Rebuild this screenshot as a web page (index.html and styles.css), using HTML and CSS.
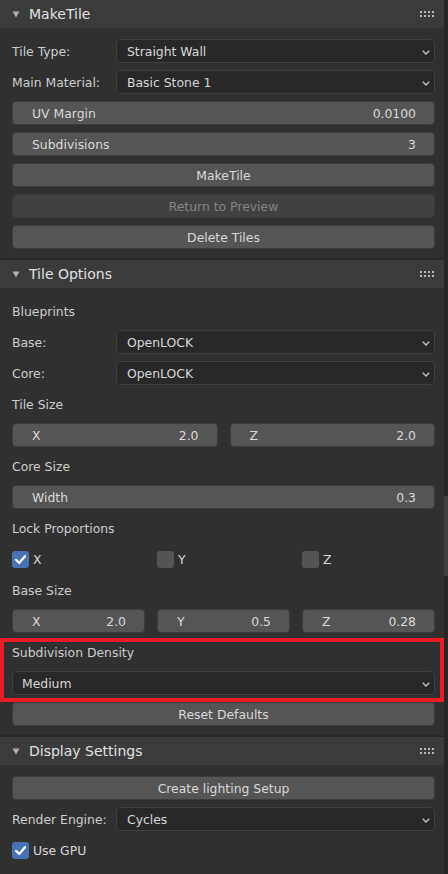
FILE: index.html
```html
<!DOCTYPE html>
<html>
<head>
<meta charset="utf-8">
<link rel="stylesheet" href="styles.css">
</head>
<body>
<div class="app">
  <div class="region">
    <section class="panel">
      <div class="panel-header">
        <svg class="tri" width="8" height="7" viewBox="0 0 8 7"><polygon points="0.5,0.5 7.5,0.5 4,6.5"/></svg>
        <span class="title">MakeTile</span>
        <svg class="grip" width="14" height="8" viewBox="0 0 14 8"><g><rect x="0" y="0" width="2" height="2"/><rect x="4" y="0" width="2" height="2"/><rect x="8" y="0" width="2" height="2"/><rect x="12" y="0" width="2" height="2"/><rect x="0" y="4" width="2" height="2"/><rect x="4" y="4" width="2" height="2"/><rect x="8" y="4" width="2" height="2"/><rect x="12" y="4" width="2" height="2"/></g></svg>
      </div>
      <div class="panel-body">
        <div class="prop"><span class="lbl">Tile Type:</span><div class="menu"><span>Straight Wall</span><svg class="chev" width="8" height="5" viewBox="0 0 8 5"><polyline points="0.8,0.8 4,4 7.2,0.8"/></svg></div></div>
        <div class="prop"><span class="lbl">Main Material:</span><div class="menu"><span>Basic Stone 1</span><svg class="chev" width="8" height="5" viewBox="0 0 8 5"><polyline points="0.8,0.8 4,4 7.2,0.8"/></svg></div></div>
        <div class="num"><span>UV Margin</span><span>0.0100</span></div>
        <div class="num"><span>Subdivisions</span><span>3</span></div>
        <div class="btn">MakeTile</div>
        <div class="btn disabled">Return to Preview</div>
        <div class="btn">Delete Tiles</div>
      </div>
    </section>

    <section class="panel">
      <div class="panel-header">
        <svg class="tri" width="8" height="7" viewBox="0 0 8 7"><polygon points="0.5,0.5 7.5,0.5 4,6.5"/></svg>
        <span class="title">Tile Options</span>
        <svg class="grip" width="14" height="8" viewBox="0 0 14 8"><g><rect x="0" y="0" width="2" height="2"/><rect x="4" y="0" width="2" height="2"/><rect x="8" y="0" width="2" height="2"/><rect x="12" y="0" width="2" height="2"/><rect x="0" y="4" width="2" height="2"/><rect x="4" y="4" width="2" height="2"/><rect x="8" y="4" width="2" height="2"/><rect x="12" y="4" width="2" height="2"/></g></svg>
      </div>
      <div class="panel-body">
        <div class="text-row">Blueprints</div>
        <div class="prop"><span class="lbl">Base:</span><div class="menu"><span>OpenLOCK</span><svg class="chev" width="8" height="5" viewBox="0 0 8 5"><polyline points="0.8,0.8 4,4 7.2,0.8"/></svg></div></div>
        <div class="prop"><span class="lbl">Core:</span><div class="menu"><span>OpenLOCK</span><svg class="chev" width="8" height="5" viewBox="0 0 8 5"><polyline points="0.8,0.8 4,4 7.2,0.8"/></svg></div></div>
        <div class="text-row">Tile Size</div>
        <div class="cols2">
          <div class="num"><span>X</span><span>2.0</span></div>
          <div class="num"><span>Z</span><span>2.0</span></div>
        </div>
        <div class="text-row">Core Size</div>
        <div class="num"><span>Width</span><span>0.3</span></div>
        <div class="text-row">Lock Proportions</div>
        <div class="cols3">
          <label class="check"><span class="box on"><svg width="17" height="17" viewBox="0 0 17 17"><polyline points="4,8.8 7.2,12 13,5.2"/></svg></span><span>X</span></label>
          <label class="check"><span class="box"></span><span>Y</span></label>
          <label class="check"><span class="box"></span><span>Z</span></label>
        </div>
        <div class="text-row">Base Size</div>
        <div class="cols3">
          <div class="num"><span>X</span><span>2.0</span></div>
          <div class="num"><span>Y</span><span>0.5</span></div>
          <div class="num"><span>Z</span><span>0.28</span></div>
        </div>
        <div class="highlight">
          <div class="text-row">Subdivision Density</div>
          <div class="menu full"><span>Medium</span><svg class="chev" width="8" height="5" viewBox="0 0 8 5"><polyline points="0.8,0.8 4,4 7.2,0.8"/></svg></div>
        </div>
        <div class="btn">Reset Defaults</div>
      </div>
    </section>

    <section class="panel last">
      <div class="panel-header">
        <svg class="tri" width="8" height="7" viewBox="0 0 8 7"><polygon points="0.5,0.5 7.5,0.5 4,6.5"/></svg>
        <span class="title">Display Settings</span>
        <svg class="grip" width="14" height="8" viewBox="0 0 14 8"><g><rect x="0" y="0" width="2" height="2"/><rect x="4" y="0" width="2" height="2"/><rect x="8" y="0" width="2" height="2"/><rect x="12" y="0" width="2" height="2"/><rect x="0" y="4" width="2" height="2"/><rect x="4" y="4" width="2" height="2"/><rect x="8" y="4" width="2" height="2"/><rect x="12" y="4" width="2" height="2"/></g></svg>
      </div>
      <div class="panel-body">
        <div class="btn">Create lighting Setup</div>
        <div class="prop"><span class="lbl">Render Engine:</span><div class="menu"><span>Cycles</span><svg class="chev" width="8" height="5" viewBox="0 0 8 5"><polyline points="0.8,0.8 4,4 7.2,0.8"/></svg></div></div>
        <div class="single-check">
          <label class="check"><span class="box on"><svg width="17" height="17" viewBox="0 0 17 17"><polyline points="4,8.8 7.2,12 13,5.2"/></svg></span><span>Use GPU</span></label>
        </div>
      </div>
    </section>
  </div>
  <div class="scrollbar"><div class="thumb"></div></div>
</div>
</body>
</html>
```

FILE: styles.css
```css
* { box-sizing: border-box; }

html, body {
  margin: 0;
  padding: 0;
  background: #282828;
}

body {
  font-family: "DejaVu Sans", "Liberation Sans", sans-serif;
  font-size: 12.4px;
  color: #d0d0d0;
}

.app {
  display: flex;
  width: 448px;
  height: 874px;
  overflow: hidden;
}

.region {
  width: 444px;
  display: flex;
  flex-direction: column;
  gap: 2px;
  background: #282828;
}

.scrollbar {
  width: 4px;
  background: #262626;
  padding-top: 496px;
}

.thumb {
  height: 80px;
  background: #3e3e3e;
}

.panel {
  background: #303030;
  display: flex;
  flex-direction: column;
}

.panel.last {
  flex: 1;
}

.panel-header {
  height: 28px;
  background: #3b3b3b;
  display: flex;
  align-items: center;
  padding: 0 10px 0 12px;
}

.tri {
  fill: #b0b0b0;
  margin-top: 1px;
}

.title {
  font-size: 14px;
  color: #e2e2e2;
  margin-left: 9px;
  flex: 1;
}

.grip {
  fill: #b8b8b8;
  margin-top: 1px;
}

.panel-body {
  display: flex;
  flex-direction: column;
  gap: 7px;
  padding: 11px 9px 9px 12px;
}

.panel.last .panel-body {
  flex: 1;
}

.prop {
  display: grid;
  grid-template-columns: 104px 1fr;
  height: 24px;
  align-items: center;
}

.lbl {
  color: #cecece;
  white-space: nowrap;
}

.menu {
  height: 24px;
  background: #282828;
  border: 1px solid #404040;
  border-radius: 4px;
  display: flex;
  align-items: center;
  justify-content: space-between;
  padding: 0 4px 0 10px;
  color: #d8d8d8;
}

.menu.full {
  padding-left: 9px;
}

.chev {
  fill: none;
  stroke: #c8c8c8;
  stroke-width: 1.3;
  margin-top: 2px;
}

.num {
  height: 24px;
  background: #555555;
  border: 1px solid #3c3c3c;
  border-radius: 4px;
  display: flex;
  align-items: center;
  justify-content: space-between;
  padding: 0 18px 0 19px;
  color: #dadada;
}

.btn {
  height: 24px;
  background: #555555;
  border: 1px solid #3c3c3c;
  border-radius: 4px;
  display: flex;
  align-items: center;
  justify-content: center;
  color: #dadada;
}

.btn.disabled {
  background: #414141;
  border-color: #383838;
  color: #858585;
}

.text-row {
  height: 24px;
  display: flex;
  align-items: center;
  color: #cecece;
}

.cols2 {
  display: grid;
  grid-template-columns: 1fr 1fr;
  gap: 12px;
}

.cols3 {
  display: grid;
  grid-template-columns: 1fr 1fr 1fr;
  gap: 12px;
  height: 24px;
  align-items: center;
}

.check {
  display: flex;
  align-items: center;
  gap: 4px;
  color: #d8d8d8;
}

.box {
  width: 17px;
  height: 17px;
  border-radius: 3px;
  background: #545454;
  display: block;
}

.box.on {
  background: #4772b3;
}

.box svg {
  display: block;
  fill: none;
  stroke: #ffffff;
  stroke-width: 2.2;
  stroke-linecap: round;
  stroke-linejoin: round;
}

.single-check {
  height: 24px;
  display: flex;
  align-items: center;
}

.highlight {
  position: relative;
  display: flex;
  flex-direction: column;
  gap: 7px;
}

.highlight::after {
  content: "";
  position: absolute;
  top: -2px;
  left: -12px;
  right: -9px;
  bottom: -7px;
  border: 4px solid #ec1c24;
  pointer-events: none;
}
```
